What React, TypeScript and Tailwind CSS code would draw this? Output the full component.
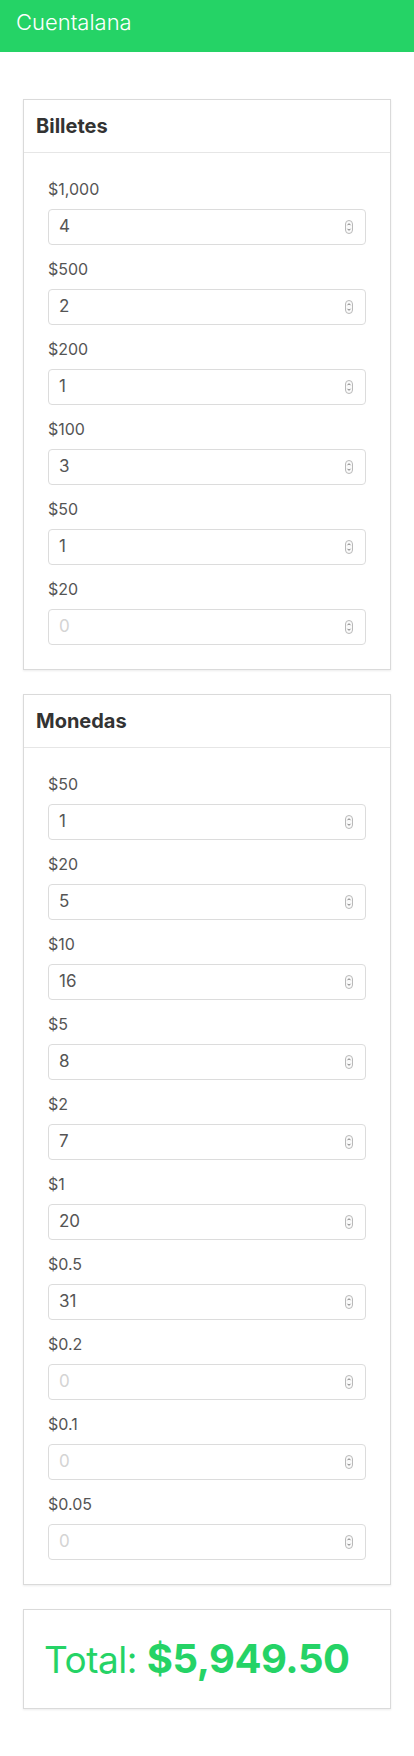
import React, { useState } from 'react'

type Denomination = { label: string; value: number }

const billetes: Denomination[] = [
  { label: '$1,000', value: 1000 },
  { label: '$500', value: 500 },
  { label: '$200', value: 200 },
  { label: '$100', value: 100 },
  { label: '$50', value: 50 },
  { label: '$20', value: 20 },
]

const monedas: Denomination[] = [
  { label: '$50', value: 50 },
  { label: '$20', value: 20 },
  { label: '$10', value: 10 },
  { label: '$5', value: 5 },
  { label: '$2', value: 2 },
  { label: '$1', value: 1 },
  { label: '$0.5', value: 0.5 },
  { label: '$0.2', value: 0.2 },
  { label: '$0.1', value: 0.1 },
  { label: '$0.05', value: 0.05 },
]

const Spinner = () => (
  <svg width="8" height="14" viewBox="0 0 8 14" className="shrink-0">
    <rect x="0.5" y="0.5" width="7" height="13" rx="3.5" fill="#fafafa" stroke="#b9b9b9" />
    <path d="M2.5 5.2 L4 3.7 L5.5 5.2" fill="none" stroke="#666" strokeWidth="0.9" />
    <path d="M2.5 8.8 L4 10.3 L5.5 8.8" fill="none" stroke="#666" strokeWidth="0.9" />
  </svg>
)

const CountField: React.FC<{
  label: string
  value: string
  onChange: (v: string) => void
}> = ({ label, value, onChange }) => (
  <div className="flex flex-col gap-2">
    <label className="text-[16px] leading-6 text-[#555]">{label}</label>
    <div className="flex h-9 items-center rounded border border-[#dcdcdc] bg-white pl-[10px] pr-3">
      <input
        inputMode="numeric"
        className="min-w-0 flex-1 bg-transparent text-[17px] text-[#555] outline-none placeholder:text-[#d4d4d4]"
        placeholder="0"
        value={value}
        onChange={(e) => onChange(e.target.value)}
      />
      <Spinner />
    </div>
  </div>
)

const Card: React.FC<{
  title: string
  items: Denomination[]
  counts: Record<string, string>
  prefix: string
  setCount: (key: string, v: string) => void
}> = ({ title, items, counts, prefix, setCount }) => (
  <section className="border border-[#dadada] bg-white shadow-[0_1px_2px_rgba(0,0,0,0.08)]">
    <div className="flex h-[53px] items-center border-b border-[#e6e6e6] px-3">
      <h2 className="text-[20px] font-bold text-[#333]">{title}</h2>
    </div>
    <div className="flex flex-col gap-3 p-6">
      {items.map((item) => {
        const key = prefix + item.label
        return (
          <CountField
            key={key}
            label={item.label}
            value={counts[key] || ''}
            onChange={(v) => setCount(key, v)}
          />
        )
      })}
    </div>
  </section>
)

export default function App() {
  const [counts, setCounts] = useState<Record<string, string>>({
    'b$1,000': '4',
    'b$500': '2',
    'b$200': '1',
    'b$100': '3',
    'b$50': '1',
    'm$50': '1',
    'm$20': '5',
    'm$10': '16',
    'm$5': '8',
    'm$2': '7',
    'm$1': '20',
    'm$0.5': '31',
  })

  const setCount = (key: string, v: string) =>
    setCounts((c) => ({ ...c, [key]: v }))

  const total =
    billetes.reduce((s, d) => s + (Number(counts['b' + d.label]) || 0) * d.value, 0) +
    monedas.reduce((s, d) => s + (Number(counts['m' + d.label]) || 0) * d.value, 0)

  const formatted = total.toLocaleString('en-US', {
    minimumFractionDigits: 2,
    maximumFractionDigits: 2,
  })

  return (
    <div className="min-h-[1756px] bg-white font-['Inter',sans-serif]">
      <header className="flex h-[52px] items-center bg-[#25d366] px-4 pb-2">
        <h1 className="text-[22px] font-light text-white">Cuentalana</h1>
      </header>
      <main className="flex flex-col gap-6 px-[23px] pt-[47px]">
        <Card title="Billetes" items={billetes} counts={counts} prefix="b" setCount={setCount} />
        <Card title="Monedas" items={monedas} counts={counts} prefix="m" setCount={setCount} />
        <section className="flex h-[100px] items-center border border-[#dadada] bg-white px-5 shadow-[0_1px_2px_rgba(0,0,0,0.08)]">
          <p className="whitespace-nowrap text-[37px] leading-none tracking-[-0.5px] text-[#25d366]">
            Total: <span className="text-[40px] font-bold">${formatted}</span>
          </p>
        </section>
      </main>
    </div>
  )
}
